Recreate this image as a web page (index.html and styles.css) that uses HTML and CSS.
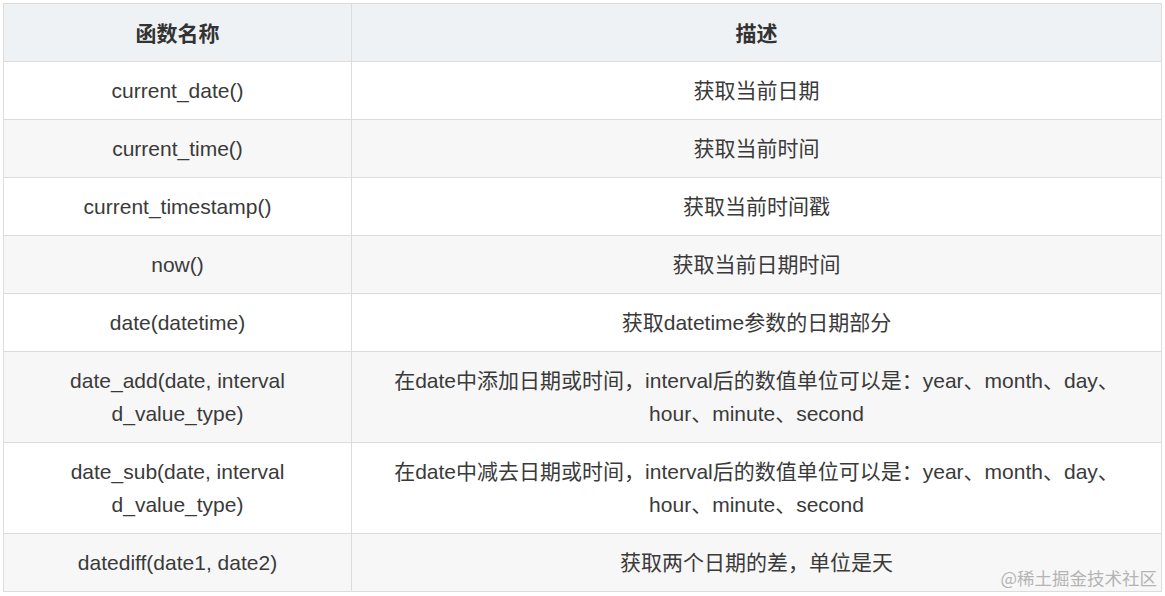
FILE: index.html
```html
<!DOCTYPE html>
<html lang="zh">
<head>
<meta charset="utf-8">
<link rel="stylesheet" href="styles.css">
</head>
<body>
<div class="wrap">
<table class="fn-table">
<colgroup><col class="c1"><col class="c2"></colgroup>
<thead>
<tr><th>函数名称</th><th>描述</th></tr>
</thead>
<tbody>
<tr><td>current_date()</td><td>获取当前日期</td></tr>
<tr><td>current_time()</td><td>获取当前时间</td></tr>
<tr><td>current_timestamp()</td><td>获取当前时间戳</td></tr>
<tr><td>now()</td><td>获取当前日期时间</td></tr>
<tr><td>date(datetime)</td><td>获取datetime参数的日期部分</td></tr>
<tr><td>date_add(date, interval<br>d_value_type)</td><td>在date中添加日期或时间，interval后的数值单位可以是：year、month、day、<br>hour、minute、second</td></tr>
<tr><td>date_sub(date, interval<br>d_value_type)</td><td>在date中减去日期或时间，interval后的数值单位可以是：year、month、day、<br>hour、minute、second</td></tr>
<tr><td>datediff(date1, date2)</td><td>获取两个日期的差，单位是天</td></tr>
</tbody>
</table>
<div class="watermark">@稀土掘金技术社区</div>
</div>
</body>
</html>
```

FILE: styles.css
```css
html, body {
  margin: 0;
  padding: 0;
  background: #ffffff;
}
.wrap {
  position: relative;
  padding: 3px 0 0 3px;
  width: 1158px;
}
.fn-table {
  border-collapse: collapse;
  table-layout: fixed;
  width: 1158px;
  font-family: "Liberation Sans", "Noto Sans CJK SC", Arial, sans-serif;
  font-size: 21px;
  color: #3a3a3a;
}
.c1 { width: 348px; }
.c2 { width: 810px; }
.fn-table th,
.fn-table td {
  border: 1px solid #dcdcdc;
  padding: 12px 10px;
  line-height: 33px;
  text-align: center;
  vertical-align: middle;
  white-space: nowrap;
}
.fn-table th {
  background: #eff2f4;
  font-weight: bold;
  color: #333333;
  font-size: 21px;
  padding: 13px 10px 11px;
}
.fn-table tbody tr:nth-child(odd) td { background: #ffffff; }
.fn-table tbody tr:nth-child(even) td { background: #f7f7f7; }
.watermark {
  position: absolute;
  right: 4px;
  bottom: 4px;
  font-family: "Noto Sans CJK SC", "Liberation Sans", sans-serif;
  font-size: 17.5px;
  line-height: 20px;
  color: #b4b4b4;
}
```
